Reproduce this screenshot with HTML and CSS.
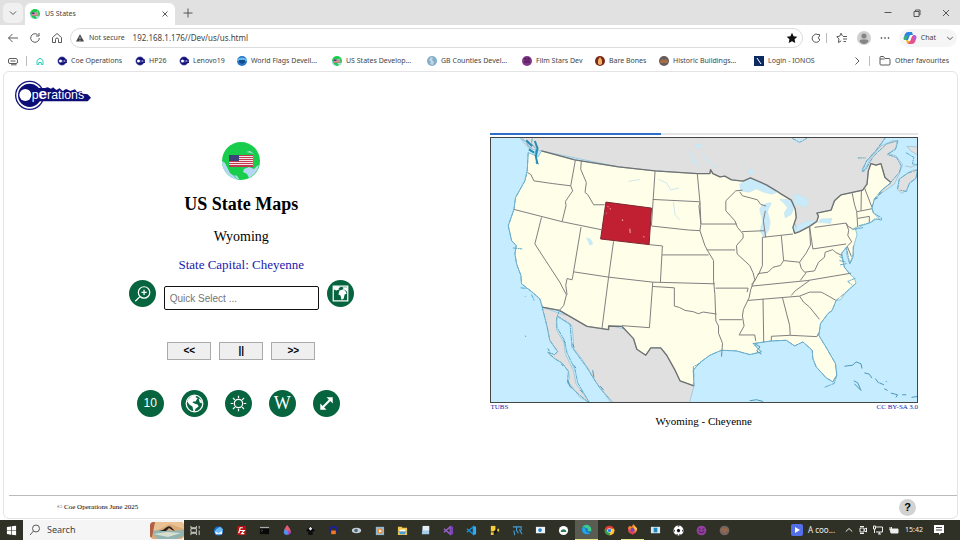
FILE: index.html
```html
<!DOCTYPE html>
<html lang="en">
<head>
<meta charset="utf-8">
<meta name="viewport" content="width=device-width, initial-scale=1">
<title>US States</title>
<link rel="stylesheet" href="styles.css">
</head>
<body>
<svg class="defs" aria-hidden="true">
  <symbol id="coe" viewBox="0 0 20 20"><circle cx="10" cy="10" r="8.500" fill="#10107a" stroke="#8c8cc4"/><path d="M9 7h11v7H9z" fill="#10107a"/><circle cx="7" cy="10" r="3" fill="#fff"/><path d="M12 8v5M15 8v4M18 9v3" stroke="#b9b9e6" stroke-width="1.3"/></symbol>
  <symbol id="usa" viewBox="0 0 38 38"><circle cx="19" cy="19" r="19" fill="#17cd4b"/><path d="M0 19l3 2 3 6 2 4 4 3 3 3.500A19 19 0 0 1 0 19zM22 27l5-2 5 2 3-3 2-1a19 19 0 0 1-10 13l-2-4-4-2zM24 10l4-1 4 3-3-1z" fill="#b4d8f4"/><path d="M12 33l3 1-1-2 3 5-2 0z" fill="#b4d8f4"/><path d="M7 13h24v12H7z" fill="#f6e4e6"/><path d="M7 13h24v1H7zM7 15h24v1H7zM7 17h24v1H7zM7 19h24v1H7zM7 21h24v1H7zM7 23h24v2H7z" fill="#c23a50"/><path d="M7 13h10v6H7z" fill="#3d4278"/></symbol>
</svg>

<header class="browser">
  <div class="tabs">
    <button class="tab-menu" aria-label="Tab actions"><svg class="i10" viewBox="0 0 10 10"><path d="M2 3.500l3 3 3-3" class="ln"/></svg></button>
    <div class="tab"><svg class="i10"><use href="#usa"/></svg><span>US States</span><button class="plain push" aria-label="Close tab"><svg class="i8" viewBox="0 0 8 8"><path d="M1.500 1.500l5 5M6.500 1.500l-5 5" class="ln"/></svg></button></div>
    <button class="plain new-tab" aria-label="New tab"><svg class="i10" viewBox="0 0 10 10"><path d="M5 .5v9M.5 5h9" class="ln"/></svg></button>
    <div class="window-buttons">
      <button class="plain" aria-label="Minimise"><svg class="i8" viewBox="0 0 8 8"><path d="M.5 3.500h7" class="ln"/></svg></button>
      <button class="plain" aria-label="Restore"><svg class="i8" viewBox="0 0 8 8"><path d="M1 2.500h5v5H1zM2.500 2V1H7v5H6.500" class="ln"/></svg></button>
      <button class="plain" aria-label="Close"><svg class="i8" viewBox="0 0 8 8"><path d="M1 1l6 6M7 1L1 7" class="ln"/></svg></button>
    </div>
  </div>

  <div class="toolbar">
    <div class="nav">
      <button class="plain" aria-label="Back"><svg class="i12" viewBox="0 0 12 12"><path d="M11 6H1.500M5.500 2l-4 4 4 4" class="ln"/></svg></button>
      <button class="plain" aria-label="Refresh"><svg class="i12" viewBox="0 0 12 12"><path d="M10.300 6A4.300 4.300 0 1 1 8.500 2.500M10 1v3H7" class="ln"/></svg></button>
      <button class="plain" aria-label="Home"><svg class="i12" viewBox="0 0 12 12"><path d="M1.500 5.500L6 1.500l4.500 4V10.500H7.500V7.500a1.500 1.500 0 0 0-3 0v3h-3z" class="ln"/></svg></button>
    </div>
    <label class="address">
      <svg class="i8" viewBox="0 0 8 8"><path d="M4 .3L8 7.500H0z" fill="#444"/><path d="M4 3v2.200M4 6v.8" stroke="#fff" stroke-width=".7"/></svg>
      <span>Not secure</span>
      <input type="text" value="192.168.1.176//Dev/us/us.html" aria-label="Address">
      <svg class="i12" viewBox="0 0 12 12"><path d="M6 .8l1.600 3.400 3.700.5-2.700 2.600.7 3.700L6 9.200 2.700 11l.7-3.700L.7 4.700l3.700-.5z" fill="#111"/></svg>
    </label>
    <div class="tools">
      <button class="plain" aria-label="Extensions"><svg class="i10" viewBox="0 0 10 10"><path d="M8.500 3.500V1.500H6a1.200 1.200 0 0 0-2 0 4 4 0 1 0 4.500 6V6A1.200 1.200 0 1 1 8.500 3.500" class="ln"/></svg></button>
      <i class="bar"></i>
      <button class="plain" aria-label="Favourites"><svg class="i12" viewBox="0 0 12 12"><path d="M6.500 4L5 1.200 3.700 4.200.8 4.700 3 7l-.6 3.500 2.800-1.600M7 4.500h4M7 7h4M7.500 9.500H10" class="ln"/></svg></button>
      <button class="plain" aria-label="Profile"><svg class="i14" viewBox="0 0 14 14"><circle cx="7" cy="7" r="7" fill="#cfcfcf"/><circle cx="7" cy="5" r="2.600" fill="#858585"/><path d="M2.500 10q0-1.500 2-1.500h5q2 0 2 1.500-1.500 3-4.500 3T2.500 10z" fill="#858585"/></svg></button>
      <button class="plain" aria-label="More"><svg class="i10" viewBox="0 0 10 10"><path d="M.8 5h1.400M4.300 5h1.400M7.800 5h1.400" stroke="#444" stroke-width="1.300"/></svg></button>
      <button class="chat"><svg class="i14" viewBox="0 0 14 14"><path d="M5 1h4l1 3H7L5 9H2Q0 9 1 6L2 3Q3 1 5 1z" fill="#2b84e0"/><path d="M1 6l4-2-2 5H2Q0 9 1 6z" fill="#3cb36a"/><path d="M3 9h3l1 1 1 3H5Q4 13 3 9z" fill="#f2b52c"/><path d="M9 5h3q2 0 1 3l-1 3q-1 2-3 2H5l2-3z" fill="#e3548f"/><path d="M10 4h2q2 1 1 4l-2 1z" fill="#b25be0"/><path d="M7 5l2 0-2 5H5z" fill="#fff"/></svg><span>Chat</span><svg class="i8" viewBox="0 0 8 8"><path d="M1.200 3L4 5.500 6.800 3" class="ln"/></svg></button>
    </div>
  </div>

  <nav class="favourites" aria-label="Favourites">
    <svg class="i12" viewBox="0 0 12 12"><path d="M3 3.500h6a2 2 0 0 1 1.500 2V7A1.500 1.500 0 0 1 9 8.500H3A1.500 1.500 0 0 1 1.500 7V5A1.500 1.500 0 0 1 3 3.500zM3.500 6h5M4 9.800h5.500" class="ln"/></svg>
    <i class="bar"></i>
    <a href="#" class="fav fav-home" aria-label="Home"><svg class="i8" viewBox="0 0 8 8"><path d="M1 3.500L4 1l3 2.500v4H5.300v-2H2.700v2H1z" fill="none" stroke="#2cd0bd"/></svg></a>
    <a href="#" class="fav w78"><svg class="i10"><use href="#coe"/></svg><span>Coe Operations</span></a>
    <a href="#" class="fav w44"><svg class="i10"><use href="#coe"/></svg><span>HP26</span></a>
    <a href="#" class="fav w58"><svg class="i10"><use href="#coe"/></svg><span>Lenovo19</span></a>
    <a href="#" class="fav w95"><svg class="i10" viewBox="0 0 10 10"><circle cx="5" cy="5" r="5" fill="#2672c4"/><path d="M0 3q5-3 10 0v2H0z" fill="#66b8ed"/><path d="M2 4h6v2L5 8 2 6z" fill="#134c8a"/></svg><span>World Flags Devell...</span></a>
    <a href="#" class="fav w95"><svg class="i10"><use href="#usa"/></svg><span>US States Develop...</span></a>
    <a href="#" class="fav w95"><svg class="i10" viewBox="0 0 10 10"><circle cx="5" cy="5" r="5" fill="#84aecb"/><path d="M4 1l2 1-1 2 2 2-1 3-3-1 1-2-2-2z" fill="#c1d6df"/></svg><span>GB Counties Devel...</span></a>
    <a href="#" class="fav w73"><svg class="i10" viewBox="0 0 10 10"><circle cx="5" cy="5" r="5" fill="#81358b"/><path d="M3 2l2 1 2-1v2H3zM2 6h6" fill="#bd65c8" stroke="#421847"/></svg><span>Film Stars Dev</span></a>
    <a href="#" class="fav w64"><svg class="i10" viewBox="0 0 10 10"><circle cx="5" cy="5" r="5" fill="#7a2b18"/><path d="M5 1l2 3v4l-2 1-2-1V4z" fill="#f0b06a"/></svg><span>Bare Bones</span></a>
    <a href="#" class="fav w95"><svg class="i10" viewBox="0 0 10 10"><circle cx="5" cy="5" r="5" fill="#665b5d"/><path d="M1 5l2-2 2 1 2-1 2 2v2H1z" fill="#a66c42"/></svg><span>Historic Buildings...</span></a>
    <a href="#" class="fav"><svg class="i10" viewBox="0 0 10 10"><path d="M0 0h10v10H0z" fill="#0b2a63"/><path d="M3 2l4 6" stroke="#fff"/></svg><span>Login - IONOS</span></a>
    <button class="plain push" aria-label="More favourites"><svg class="i8" viewBox="0 0 8 8"><path d="M2.500.5L6 4 2.500 7.500" class="ln"/></svg></button>
    <i class="bar"></i>
    <a href="#" class="fav fav-other"><svg class="i12" viewBox="0 0 12 12"><path d="M1 4V2.500Q1 1.500 2 1.500h2.500l1.500 2h4q1 0 1 1V9q0 1-1 1H2Q1 10 1 9V4h4.500" class="ln"/></svg><span>Other favourites</span></a>
  </nav>
</header>

<div class="page">
  <a href="#" class="logo" aria-label="Coe Operations">
    <svg viewBox="0 0 228 93"><circle cx="44" cy="46" r="42" fill="#fff" stroke="#15157d" stroke-width="4"/><circle cx="44" cy="46" r="35" fill="#0d0d78"/><path d="M60 24h30l8-2 10 4 6-4 10 8 10-5 8 7 12-5 12 6 14-5 6 8 14-2 4 7 14 2 10 10-10 11H60z" fill="#0d0d78"/><circle cx="31" cy="45" r="18" fill="#fff"/><text x="50" y="58" class="logo-text">p<tspan class="logo-e">e</tspan>rations</text></svg>
  </a>
  <main class="content">
    <section class="controls">
      <svg class="globe" role="img" aria-label="US globe"><use href="#usa"/></svg>
      <h1>US State Maps</h1>
      <p class="state">Wyoming</p>
      <p class="capital">State Capital: Cheyenne</p>
      <div class="search-row">
        <button class="round" aria-label="Zoom"><svg viewBox="0 0 26 26" class="wl"><circle cx="14.500" cy="12" r="5.500"/><path d="M10.500 16L6 20.500M14.500 9.500v5M12 12h5"/></svg></button>
        <input type="text" class="quick" placeholder="Quick Select ..." aria-label="Quick select">
        <button class="round" aria-label="Map view"><svg viewBox="0 0 26 26"><path d="M6 6h14v14H6z" fill="none" stroke="#fff" stroke-width="1.200"/><path d="M6 6h5l2 1-2 1 1 1-3 1-3-1zM12 10l4-1 2 2 1 2-2 1-1 4-2 1-1-4-2-1zM15 7h5v5l-2-2-2-1z" fill="#fff"/></svg></button>
      </div>
      <div class="steps">
        <button aria-label="Previous">&lt;&lt;</button>
        <button aria-label="Pause">||</button>
        <button aria-label="Next">&gt;&gt;</button>
      </div>
      <div class="options">
        <button class="round">10</button>
        <button class="round" aria-label="World"><svg viewBox="0 0 26 26"><circle cx="13" cy="13" r="8" fill="none" stroke="#fff" stroke-width="1.200"/><path d="M7 9l3-3 5-1-1 2 2 1-2 3-2 0-1 1 2 1 3 1 1 2-3 2-1 3-1 0-1-5-3-2-2-3zM17 8l3 2 0 3-2-1z" fill="#fff"/></svg></button>
        <button class="round" aria-label="Brightness"><svg viewBox="0 0 26 26" class="wl"><circle cx="13" cy="13" r="4"/><path d="M13 5.500v2.500M13 18v2.500M5.500 13H8M18 13h2.500M7.700 7.700l1.800 1.800M16.500 16.500l1.800 1.800M18.300 7.700l-1.800 1.800M9.500 16.500l-1.800 1.800"/></svg></button>
        <button class="round wiki" aria-label="Wikipedia">W</button>
        <button class="round" aria-label="Full screen"><svg viewBox="0 0 26 26"><path d="M9 17l8-8" stroke="#fff" stroke-width="2"/><path d="M13 7h6v6zM7 13v6h6z" fill="#fff"/></svg></button>
      </div>
    </section>

    <figure class="map">
      <progress value="40" max="100" aria-label="Slide progress"></progress>
      <svg class="map-art" viewBox="16 21 1284 795" role="img" aria-label="Map of the United States with Wyoming highlighted">
        <path class="grey" d="M100 15L112 32 130 52 168 60 400 108 700 150 920 240 940 310 1060 280 1230 160 1245 130 1255 100 1235 75 1215 68 1235 52 1242 30 1225 29 1190 45 1160 78 1138 124 1133 115 1148 88 1178 58 1194 36 1205 15zM1220 158l-20 12M1240 175l5-30 20-15 20-12 15-2-3 25-18 12-14 27-13 8zM1262 105l18 4 20-8M1268 46l12 14 20 12V48z"/>
        <path class="grey" d="M170 530l15 60 8 40 14 22 10 12-10 9-20-7 8 10 14 10 20 12 20 25 3 18-3 15 16 20 18 25 32 18-25-33-18-25-8-40-24-50-5-35-22-38 0-32 6-5 22 14 18 10 4 30 2 40 25 32 20 30 14 28 24 32 28 40H614l13-50-45-120-160-50-200-48z"/>
        <path class="lake" d="M611 55l14 40 15 12M632 40l8 15 12-15zM650 65l20 30 15 10M792 117l12-2 1 13-12 3zM925 24l18 12 20-12M770 97l15 8M930 190l20 5 18 10 4 13-14 12-20-12-12 15zM1000 246l35-8 18 6-12 15-42 8zM680 105l20 5"/>
        <path class="usa" d="M168 60L268 87 400 108 510 120 637 128 675 128 677 116 684 128 705 138 720 136 740 147 775 151 797 141 845 162 875 180 890 190 920 208 932 235 935 260 925 290 930 308 945 303 975 287 997 272 1002 256 997 247 1040 238 1050 210 1070 192 1135 178 1148 160 1152 120 1160 98 1175 103 1190 98 1202 140 1220 155 1205 168 1190 180 1180 198 1170 205 1163 232 1167 246 1185 265 1175 266 1160 275 1135 284 1113 295 1118 312 1107 350 1106 372 1096 400 1088 375 1086 350 1070 370 1080 410 1095 430 1110 443 1115 458 1085 485 1068 508 1055 510 1043 540 1030 550 1008 580 1003 615 1030 660 1053 700 1057 735 1045 755 1025 743 995 710 985 685 983 660 955 635 930 647 905 630 860 632 805 640 830 665 795 673 755 662 710 660 675 675 645 697 625 720 627 767 585 752 570 720 545 675 527 653 497 653 482 675 455 657 445 625 410 588 370 587 370 598 305 588 222 540 170 530 163 505 140 485 108 460 106 435 93 400 88 370 92 345 78 330 68 285 85 236 90 200 118 150 125 120 128 65 158 78z"/>
        <path class="lake" d="M768 180l-3-20 32-19 48 21 36 21-20 7-24-6-22-10-22 10zM825 235l8-12 17-6 10 0-12 24 8 32-4 26-15 20-11-18 8-30zM885 206l30 0 15 20-10 25-18 10-3-15 10-15-12-15zM930 308l45-21 22-15-25-2-32 13zM1008 265l34-2-4 15-36-3zM304 322l12 4 6 14-8 4z"/>
        <path class="river" d="M430 152l20-4 15-2M520 145l25 12 12 20 25-5M565 212l5 40 14 15"/>
        <path class="usa-edge" d="M168 60L268 87 400 108 510 120 637 128 675 128 677 116 684 128 705 138 720 136 740 147 775 151 797 141 845 162 875 180 890 190 920 208 932 235 935 260 925 290 930 308 945 303 975 287 997 272 1002 256 997 247 1040 238 1050 210 1070 192 1135 178 1148 160 1152 120 1160 98 1175 103 1190 98 1202 140 1220 155M170 530l52 10 83 48 65 10v-11l40 1 35 37 10 32 27 18 15-22h30l18 22 25 45 15 32 42 15"/>
        <path class="lines" d="M126 125l10 6 9 19 55 8 56 7M270 88l-14 77 6 15-22 32 2 12-12 49M85 236l145 37 118 24M288 90l-2 25 17 40-4 30 8 6 18 31 33 0M510 120L499 285M503 206l142 7M637 128l8 85 3 67M499 286l111 12 35 2M650 280h106M646 215l-4 10 6 55-3 20 15 45 8 15 18 30 0 60 4 42 3 80 8 15 0 22 12 30-3 40M168 260l-20 80 75 115 20 38-8 32-13 15M287 289l-25 150-2 9-15-4-4 20 4 29M385 332l-15 108-20 155M265 424l106 16 132 15 187 5M492 342l40 4-6 109M531 373h140M503 455l-10 137-83-6M503 468l65 4v55l15 4 17 9 25 4 15 6 15-5 40 6M692 473h98l-3 12M703 568h69M665 358h86M772 303l68-3M773 178l-20 2-30 30 0 30 27 30 8 20 17 20 0 12-20 23 2 25 38 35 10 22 5 20-12 30-5 25-17 35-3 20 5 30-15 27h47l3 18M765 183l8 12 45 12 10 14 16 5M842 240l-6 30 7 50M833 320l-0 85-12 28M833 320l92-10M890 315l7 75-10 15-22 5-15 15-29 4-10 21-11 12M897 390l48 5 20-28 13-24-3-56 10 68 100-15M945 395l5 18 10 12 30-4 12-26 18-15 2-15 23-8 8 8 20 10M990 290l95-13 6 10 14 8M1085 277l8 22-3 15 12 20-13 12M1103 185l7 35 7 23 3 45M1131 180l-1 60M1140 170l23 60M1117 243l46-9M1120 263l35-6v18M800 467l170-17 130-22M790 510l155-13M920 495l12-14 43-31M945 497l30-12 35 0 10 5 35 20M945 497l12 18 18 15 30 37M835 505l2 130M893 500l22 85 2 30-57 3v14M917 615l80 4 6-12M947 450l18-24M1088 346l13 32"/>
        <path class="coast" d="M108 22l16 14 6 12 10 4M140 22l-2 16 14 16-5 20M150 95l10 5M128 65l-3 55-7 30-28 50-5 36-17 49 10 45 14 15-4 25 5 30 13 35 2 25 32 25 23 20 8 25M82 352l28 3M105 472l18 2M118 497l2 2M138 492l8 18M119 616l2 4M170 530l15 60 8 40 24 34-10 9-20-7 22 20 20 12 20 25-3 34 16 20 50 42M222 540l-8 22 0 28 22 38 9 40 24 50 8 40 34 58M216 557l38 24 6 70 45 62 38 60 38 42M627 767l-2-47 20-23 30-22 35-15 45 2 40 11 35-8-25-25 55-8 45-2 25 17 25-12 28 25 2 25 10 25 30 33 20 12 12-20-4-35-23-40-27-45 5-35 22-30 13-10 12-30 30-25 30-27M627 740l-2-30 22-12M1057 735l-8 25-30 12M1113 443l-23 10 12 10M1220 155l-30 25-20 25-7 27 4 14 25 16 0 6-20-4-15 12-33 9-20 12 32-6M1107 345l-1 35-10 20-10-50-14 18 8 42 18 22M1065 377l10 7M1065 390l18 4M1067 403l20-4M1205 18l-30 40-28 32-14 32 12-8 22-38 40-37 33-10-6 26-25 15 28 10 14 25-6 20-26 30M1240 175l5-30 25-18 30-10-5 26-20 15-8 24-20-4M1265 65l24 14-4 20 15 3M923 22l22 12 22-12M1120 81h24"/>
        <path class="isles" d="M1080 708l25-3 10-10 15 6 3 14M1140 728l15 4 8 12M1173 745l10 14M1185 758l14 6M1108 752l12 6 10 23-20-20M1205 753l3 3M1220 789l20 5-5 8M1254 794h12M1282 802l18-3M1200 776l10 5M187 655l5 8M228 702l5 5M235 630l5 8M262 640l4 12M247 750l8 22M265 705l7 9M285 780l8 8M322 720l4 22M345 768l10 12M810 640l16 10-10 12 14 10M1185 192l8-10M1172 205l8-4M795 812l20-3 20 5"/>
        <path class="sound" d="M122 28l18 18M148 30l8 22-5 25 5 22M130 55l16 10"/>
        <path class="wyoming" d="M362 214L499 232 492 342 346 325z"/>
        <path class="wy-lakes" d="M367 226l3 3M373 233l4 2M411 266l2 5M434 294l1 13M474 318l4 1M363 247l2 1"/>
      </svg>
      <div class="credits"><a href="#">TUBS</a><a href="#">CC BY-SA 3.0</a></div>
      <figcaption>Wyoming - Cheyenne</figcaption>
    </figure>
  </main>
  <footer class="foot"><small>© Coe Operations June 2025</small><button class="help" aria-label="Help">?</button></footer>
</div>

<div class="taskbar">
  <button class="task start" aria-label="Start"><svg class="i12" viewBox="0 0 12 12"><path d="M1 2.200l4.500-.7V5.700H1zM6.200 1.400L11 .8v4.900H6.200zM1 6.300h4.500v4.200L1 9.900zM6.200 6.300H11v5l-4.800-.7z" fill="#fff"/></svg></button>
  <label class="search"><svg class="i12" viewBox="0 0 12 12"><circle cx="7" cy="4.500" r="3.500" class="ln"/><path d="M4.500 7L1 11" class="ln"/></svg><input type="text" placeholder="Search" aria-label="Search"><svg class="highlight" viewBox="0 0 34 17"><path d="M0 0h34v17H0z" fill="#d9aa78"/><path d="M2 0h32v7L20 2 6 9 0 8z" fill="#e9c193"/><path d="M0 9l12-1 10 1 12-1v6l-8 3H8z" fill="#91b3b1"/><path d="M3 12l14-2 14 1-13 4z" fill="#d8dfcf"/><path d="M9 9q5-1 8-4 3-2 5 1l3 3-3-1-3-2-3 3z" fill="#29211d"/><path d="M0 0h5L2 15H0z" fill="#b35f43"/></svg></label>
  <button class="task" aria-label="Task view"><svg viewBox="0 0 12 12"><path d="M1 1v2h6V1M1 11V9h6v2M1 4h6v4H1zM10 1v3M10 6v5" fill="none" stroke="#ddd"/></svg></button>
  <button class="task" aria-label="Mail"><svg viewBox="0 0 12 12"><circle cx="6" cy="6.500" r="5" fill="#1674d8"/><path d="M3 5l5-3 3 3-3 5H4z" fill="#68baf5"/><path d="M2 6l4 3 4-3v4H3z" fill="#e5f2fc"/></svg></button>
  <button class="task" aria-label="FileZilla"><svg viewBox="0 0 12 12"><path d="M1 1h10v10H1z" fill="#b60d0d"/><path d="M3 9l1.500-6h3M3.500 6h3M6 6h3L6 9.500h3" fill="none" stroke="#fff" stroke-width="1.300"/></svg></button>
  <button class="task" aria-label="Terminal"><svg viewBox="0 0 12 12"><path d="M1 2h10v8H1z" fill="#080808"/><path d="M1 2h10v1.500H1z" fill="#aaa"/><path d="M2.500 5l1.500 1-1.500 1" fill="none" stroke="#888" stroke-width=".6"/></svg></button>
  <button class="task" aria-label="Paint"><svg viewBox="0 0 12 12"><path d="M5.500 0Q10 5 9.500 8A4 4 0 0 1 2 8Q2 5 5.500 0z" fill="#e75b75"/><path d="M3 4q3 1 3 7-4 0-4-3z" fill="#4994ee"/><path d="M7 6l3 2q-1 3-4 3z" fill="#924bc9"/></svg></button>
  <button class="task" aria-label="Inkscape"><svg viewBox="0 0 12 12"><path d="M6 1l5 5-3 2 1 2-3 1-3-1 1-2-3-2z" fill="#0c0c0c"/><path d="M6 2l2 2-2 2-2-2z" fill="#e6edf2"/></svg></button>
  <button class="task" aria-label="Audacity"><svg viewBox="0 0 12 12"><path d="M2 8V6a4 4 0 0 1 8 0v2" fill="none" stroke="#1b1fa0" stroke-width="2"/><path d="M3.500 6h5v4h-5z" fill="#ee7b22"/></svg></button>
  <button class="task" aria-label="Viewer"><svg viewBox="0 0 12 12"><ellipse cx="6" cy="6" rx="5" ry="3" fill="#c8d0d7"/><circle cx="5.500" cy="6" r="2" fill="#4c6b85"/></svg></button>
  <button class="task" aria-label="Media"><svg viewBox="0 0 12 12"><path d="M2 2h9v9H2z" fill="#8ebad4"/><circle cx="6.500" cy="6.500" r="3" fill="#ed8b38"/><path d="M5.500 4.500l3 2-3 2z" fill="#fff"/></svg></button>
  <button class="task" aria-label="Files"><svg viewBox="0 0 12 12"><path d="M1 2h4l1 1h5v8H1z" fill="#f6c94d"/><path d="M3 5h6v2H3z" fill="#fff"/><path d="M1 7h10v1H9v2H3V8H1z" fill="#4a9cd9"/></svg></button>
  <button class="task" aria-label="Notes"><svg viewBox="0 0 12 12"><path d="M3 1h7v9H2z" fill="#a5cbe8"/><path d="M3 1h7v5H3z" fill="#e6eef5"/></svg></button>
  <button class="task" aria-label="Visual Studio"><svg viewBox="0 0 12 12"><path d="M1 4l7 6V2L1 8" fill="none" stroke="#9b63cf" stroke-width="1.500"/><path d="M8 1l3 1v8l-3 1z" fill="#7b43ba"/></svg></button>
  <button class="task" aria-label="Code editor"><svg viewBox="0 0 12 12"><path d="M1 4l7 6V2L1 8" fill="none" stroke="#168fdb" stroke-width="1.500"/><path d="M8 1l3 1v8l-3 1z" fill="#33adf0"/></svg></button>
  <button class="task" aria-label="Database tool"><svg viewBox="0 0 12 12"><path d="M2 1h5v6H2z" fill="#f4cf38"/><path d="M5 7l5-4v5L6 10z" fill="#171717"/><path d="M9 4h2v3H9zM2 8h3v3H2z" fill="#eec43a"/></svg></button>
  <button class="task" aria-label="Workbench"><svg viewBox="0 0 12 12"><path d="M1 2h4v4l2 3M5 2h5v4M2 6l1 5M8 5l3 5" fill="none" stroke="#42a0dc" stroke-width="1.200"/></svg></button>
  <button class="task" aria-label="Remote desktop"><svg viewBox="0 0 12 12"><path d="M1 2h10v7H1z" fill="#ecf4f8"/><circle cx="5.500" cy="5.500" r="2" fill="#2189cf"/></svg></button>
  <button class="task" aria-label="Android Studio"><svg viewBox="0 0 12 12"><circle cx="6" cy="6" r="5" fill="#fff"/><path d="M3 7.500a3 3 0 0 1 6 0z" fill="#287e5a"/></svg></button>
  <button class="task active" aria-label="Edge"><svg viewBox="0 0 12 12"><circle cx="6" cy="6" r="5.300" fill="#1479c9"/><path d="M1 4q3-5 8-2 3 2 2 6H7q2-3-2-4-2-1-4 0z" fill="#43ca84"/><path d="M1 5q4-2 4 1 0 4 5 4-5 3-8-1z" fill="#2ba5e0"/></svg></button>
  <button class="task" aria-label="Chrome"><svg viewBox="0 0 12 12"><circle cx="6" cy="6" r="5.300" fill="#e53c32"/><path d="M1.400 3.400A5.300 5.300 0 0 0 6 11.300L8 7 4 7z" fill="#28a34a"/><path d="M11 4a5.300 5.300 0 0 1-5 7.300L8 4z" fill="#f8c72e"/><circle cx="6" cy="6" r="2.500" fill="#fff"/><circle cx="6" cy="6" r="1.900" fill="#3a7be8"/></svg></button>
  <button class="task open" aria-label="Firefox"><svg viewBox="0 0 12 12"><path d="M1 4l2-2 2 1 2-3 4 5-1 4-4 2.500L2 9z" fill="#f27c2d"/><path d="M1 5l1 4 4 2.500L10 9 6 9z" fill="#e43b55"/><circle cx="6" cy="6.500" r="2.300" fill="#7c42c4"/><path d="M7 1l4 4-1 3-2-3z" fill="#fccd3a"/></svg></button>
  <button class="task" aria-label="Remote session"><svg viewBox="0 0 12 12"><path d="M1 2h10v7H1z" fill="#cfeaf5"/><path d="M4 3h4v5H4z" fill="#2087c0"/></svg></button>
  <button class="task" aria-label="Football"><svg viewBox="0 0 12 12"><circle cx="6" cy="6" r="5.500" fill="#fff"/><path d="M6 4l2 1.500L7 8H5L4 5.500zM4.500 .8h3l-1.500 1zM.6 5l1.400.5-.5 2.500zM11.400 5l-1.400.5.5 2.500zM3.500 10.500l1-1 1 1.800zM8.500 10.500l-1-1-1 1.800z" fill="#111"/></svg></button>
  <button class="task" aria-label="Film stars"><svg viewBox="0 0 12 12"><circle cx="6" cy="6" r="5.300" fill="#91409f"/><path d="M3 4l2 1M9 4L7 5M3 7q3 3 6 0" stroke="#411545" fill="none"/></svg></button>
  <button class="task" aria-label="Historic buildings"><svg viewBox="0 0 12 12"><circle cx="6" cy="6" r="5.300" fill="#73655f"/><path d="M2 6l2-3 2 1 2-1 2 3-3 1v2H5V7z" fill="#9c6747"/></svg></button>
  <div class="tray">
    <svg class="i12" viewBox="0 0 12 12"><rect width="12" height="12" rx="2" fill="#5470e8" stroke="none"/><path d="M4 3l5 3-5 3z" fill="#fff" stroke="none"/></svg>
    <span class="news">A coo...</span>
    <svg class="i8" viewBox="0 0 8 8"><path d="M.8 5.500L4 2.500l3.200 3"/></svg>
    <svg class="i8" viewBox="0 0 8 8"><path d="M1 2h4v4H1zM5 3.500L7.500 2v4L5 4.500M1 .5h4M1 7.500h4"/></svg>
    <svg class="i10" viewBox="0 0 10 10"><path d="M2.500 2H9.500v5H3M5 9h3M6.300 7v2M.5 1h2v3h-2zM1.500 4v4"/></svg>
    <svg class="i10" viewBox="0 0 10 10"><path d="M1 2v3M2.500 2v3" /><path d="M1 4h8v4H2z" fill="#eee"/></svg>
    <time>15:42</time>
    <svg class="i12" viewBox="0 0 12 12"><path d="M1 1h10v8H8l-2 2V9H1z" fill="#fff" stroke="none"/><path d="M3 3.500h6M3 6h6" stroke="#444"/></svg>
  </div>
</div>
</body>
</html>
```

FILE: styles.css
```css
* { box-sizing: border-box; }

body {
  margin: 0;
  min-height: 100vh;
  display: flex;
  flex-direction: column;
  background: #fff;
  color: #000;
  font-family: "Liberation Serif", serif;
}

button, input { font: inherit; color: inherit; margin: 0; padding: 0; }
button { cursor: pointer; }
svg { display: block; flex: none; }
a { color: inherit; text-decoration: none; }

.defs { position: absolute; width: 0; height: 0; }
.i8 { width: 8px; height: 8px; }
.i10 { width: 10px; height: 10px; }
.i12 { width: 12px; height: 12px; }
.i14 { width: 14px; height: 14px; }
.ln { fill: none; stroke: #484848; stroke-width: 0.9; }
.plain { border: 0; background: none; display: flex; }
.push { margin-left: auto; }
.bar { width: 1px; height: 10px; background: #bbb; }

/* Browser chrome */
.browser { font: 8px/12px "Noto Sans", sans-serif; color: #444; }

.tabs {
  display: flex;
  align-items: center;
  height: 25px;
  background: #e1e1e1;
}
.tab-menu {
  width: 20px;
  height: 20px;
  margin-left: 3px;
  border: 0;
  border-radius: 5px;
  background: #f0f0f0;
  display: grid;
  place-items: center;
}
.tab {
  display: flex;
  align-items: center;
  gap: 5px;
  width: 150px;
  height: 22px;
  align-self: flex-end;
  margin-left: 2px;
  padding: 0 6px 0 5px;
  border-radius: 6px 6px 0 0;
  background: #fff;
  font-size: 7px;
}
.new-tab { margin-left: 8px; }
.window-buttons { display: flex; gap: 21px; margin-left: auto; padding-right: 10px; }

.toolbar { display: flex; align-items: center; height: 25px; padding-right: 3px; }
.nav { display: flex; gap: 10px; padding: 0 7px 0 7px; }
.address {
  flex: 1;
  display: flex;
  align-items: center;
  height: 20px;
  padding: 0 4px 0 5px;
  border: 1px solid #dcdcdc;
  border-radius: 10px;
}
.address span { margin: 0 8px 0 5px; font-size: 7px; }
.address input { flex: 1; border: 0; outline: 0; background: none; height: 12px; }
.tools { display: flex; align-items: center; gap: 9px; padding-left: 8px; }
.tools .bar { margin: 0 0 0 -4px; }
.chat {
  display: flex;
  align-items: center;
  gap: 4px;
  height: 18px;
  padding: 0 3px 0 4px;
  border: 0;
  border-radius: 9px;
  background: #f5f5f5;
  font-size: 7px;
}
.chat span { margin-right: 6px; }

.favourites {
  display: flex;
  align-items: center;
  height: 21px;
  padding: 0 11px 0 7px;
  font-size: 7px;
}
.favourites > .bar { margin: 0 9px 0 7px; }
.favourites > .push + .bar { margin: 0 9px 0 8px; }
.fav { display: flex; align-items: center; gap: 4px; white-space: nowrap; }
.fav-home { width: 21px; }
.w44 { width: 44px; }
.w58 { width: 58px; }
.w64 { width: 64px; }
.w73 { width: 73px; }
.w78 { width: 78px; }
.w95 { width: 95px; }

/* Web page */
.page {
  flex: 1;
  display: flex;
  flex-direction: column;
  margin: 0 2px 1px 3px;
  border: 1px solid #e4e4e4;
  border-radius: 6px;
}
.logo { width: 76px; margin: 8px 0 0 11px; }
.logo svg { width: 76px; height: 31px; }
.logo-text { font: 37px "Liberation Sans", sans-serif; fill: #fff; }
.logo-e { font-size: 46px; font-weight: bold; }

.content { display: grid; grid-template-columns: 1fr 1fr; flex: 1; }

.controls {
  display: flex;
  flex-direction: column;
  align-items: center;
  padding: 31px 2px 0 0;
}
.globe { width: 38px; height: 38px; }
h1 { margin: 12px 0 0; font-size: 18px; line-height: 24px; }
.state { margin: 12px 0 0; font-size: 14px; line-height: 18px; }
.capital { margin: 11px 0 0; font-size: 13px; line-height: 16px; color: #1a1ab0; }

.round {
  width: 27px;
  height: 27px;
  border: 0;
  border-radius: 50%;
  background: #06643f;
  color: #fff;
  display: grid;
  place-items: center;
  font: 12px/27px "Liberation Sans", sans-serif;
}
.round svg { width: 27px; height: 27px; }
.wl { fill: none; stroke: #fff; stroke-width: 1.2; }
.wiki { font: 18px/27px "Liberation Serif", serif; }

.search-row { display: flex; gap: 8px; margin-top: 7px; }
.quick {
  width: 155px;
  height: 24px;
  margin-top: 6px;
  padding: 0 5px;
  border: 1px solid #111;
  border-radius: 2px;
  font: 10px/20px "Liberation Sans", sans-serif;
}
.quick::placeholder { color: #757575; }

.steps { display: flex; gap: 8px; margin-top: 32px; }
.steps button {
  width: 44px;
  height: 18px;
  border: 1px solid #aaa;
  background: #efefef;
  font: bold 10px/14px "Liberation Sans", sans-serif;
}
.options { display: flex; gap: 17px; margin-top: 30px; padding-right: 6px; }

.map { margin: 0; padding: 22px 39px 0 9px; }
progress {
  display: block;
  width: 100%;
  height: 2px;
  appearance: none;
  border: 0;
  background: #e4e4e4;
}
progress::-webkit-progress-bar { background: #e4e4e4; }
progress::-webkit-progress-value { background: #2d6fc4; }
.map-art {
  width: 100%;
  height: auto;
  margin-top: 2px;
  border: 1px solid #444;
  background: #c6ecff;
  stroke-linejoin: round;
}
.grey { fill: #e0e0e0; stroke: #8cbcd2; stroke-width: 2; }
.usa { fill: #fefee9; stroke: #6ea9c2; stroke-width: 2; }
.usa-edge { fill: none; stroke: #707070; stroke-width: 4; }
.lines { fill: none; stroke: #808080; stroke-width: 3; }
.lake { fill: #c9eaf8; stroke: #c4e5f2; stroke-width: 2; }
.river { fill: none; stroke: #cfe8ee; stroke-width: 3; }
.coast { fill: none; stroke: #5fa9c8; stroke-width: 3; stroke-dasharray: 13 2 5 1; }
.isles { fill: none; stroke: #4d97b8; stroke-width: 3; }
.sound { fill: none; stroke: #278bb5; stroke-width: 6; }
.wyoming { fill: #c12033; stroke: #7a2730; stroke-width: 3; }
.wy-lakes { fill: none; stroke: #e8b0b5; stroke-width: 3; }

.credits {
  display: flex;
  justify-content: space-between;
  font-size: 7px;
  line-height: 8px;
  padding-left: 1px;
  color: #1a1ab0;
}
figcaption { margin-top: 3px; text-align: center; font-size: 11px; line-height: 14px; }

.foot {
  display: flex;
  align-items: center;
  justify-content: space-between;
  height: 23px;
  margin-left: 5px;
  padding: 0 41px 0 48px;
  border-top: 1px solid #bbb;
}
.foot small { font-size: 7px; }
.help {
  width: 17px;
  height: 17px;
  border: 0;
  border-radius: 50%;
  background: #d2d2d2;
  font: bold 11px/17px "Liberation Sans", sans-serif;
}

/* Desktop taskbar */
.taskbar {
  display: flex;
  height: 20px;
  background: #303126;
  color: #eee;
  font: 8px/12px "Noto Sans", sans-serif;
}
.task {
  width: 23px;
  border: 0;
  background: none;
  display: grid;
  place-items: center;
}
.task svg { width: 11px; height: 11px; }
.active { background: #5a5c52; border-bottom: 1px solid #e8e58a; }
.open { border-bottom: 1px solid #e8e58a; }
.search {
  display: flex;
  align-items: center;
  gap: 6px;
  width: 161px;
  padding-left: 6px;
  background: #f5f5f5;
  color: #333;
}
.search input { width: 94px; border: 0; outline: 0; background: none; font-size: 9px; }
.search input::placeholder { color: #444; }
.highlight { width: 34px; height: 17px; margin-left: auto; border-radius: 4px; }
.tray { display: flex; align-items: center; gap: 6px; margin-left: auto; padding-right: 15px; }
.tray svg { fill: none; stroke: #eee; }
.tray time { font-size: 7px; margin-right: 4px; }
.news { margin-right: 4px; }
.tray > :first-child { margin-right: -1px; }
```
